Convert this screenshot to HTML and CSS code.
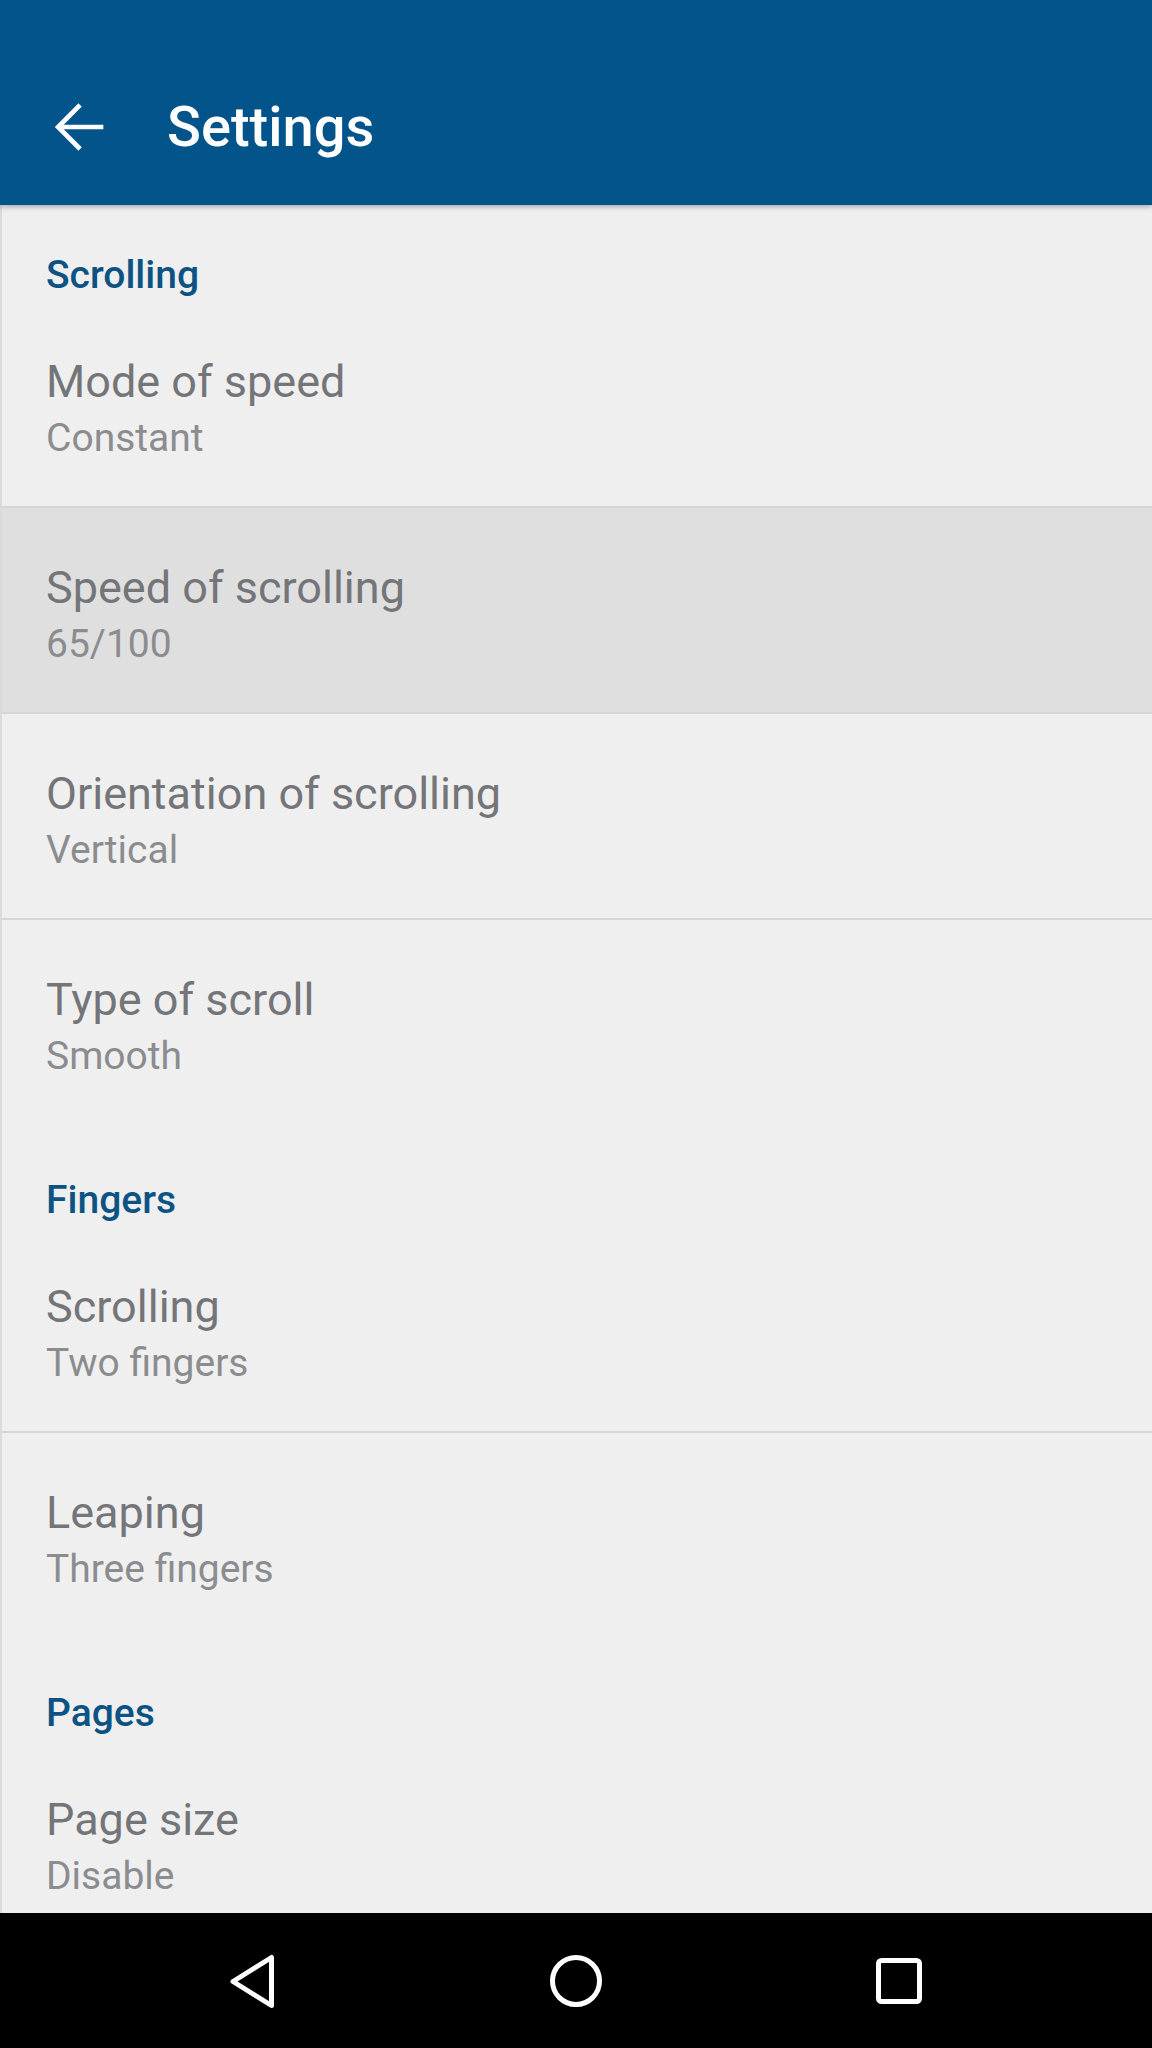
FILE: index.html
```html
<!DOCTYPE html>
<html lang="en">
<head>
  <meta charset="UTF-8">
  <meta name="viewport" content="width=device-width, initial-scale=1.0">
  <title>Settings</title>
  <link rel="stylesheet" href="styles.css">
</head>
<body>

<div class="toolbar">
  <button class="back-btn" aria-label="Back">
    <svg viewBox="0 0 24 24" width="66" height="66">
      <path d="M20 12H4.8M11.8 4.6L4.4 12l7.4 7.4" fill="none" stroke="#fff" stroke-width="1.7" stroke-linecap="square"/>
    </svg>
  </button>
  <h1>Settings</h1>
</div>

<div class="prefs">
  <div class="category">Scrolling</div>
  <div class="group">
    <div class="pref">
      <div class="pref-title">Mode of speed</div>
      <div class="pref-summary">Constant</div>
    </div>
    <div class="pref pressed">
      <div class="pref-title">Speed of scrolling</div>
      <div class="pref-summary">65/100</div>
    </div>
    <div class="pref">
      <div class="pref-title">Orientation of scrolling</div>
      <div class="pref-summary">Vertical</div>
    </div>
    <div class="pref">
      <div class="pref-title">Type of scroll</div>
      <div class="pref-summary">Smooth</div>
    </div>
  </div>

  <div class="category">Fingers</div>
  <div class="group">
    <div class="pref">
      <div class="pref-title">Scrolling</div>
      <div class="pref-summary">Two fingers</div>
    </div>
    <div class="pref">
      <div class="pref-title">Leaping</div>
      <div class="pref-summary">Three fingers</div>
    </div>
  </div>

  <div class="category">Pages</div>
  <div class="group">
    <div class="pref">
      <div class="pref-title">Page size</div>
      <div class="pref-summary">Disable</div>
    </div>
  </div>
</div>

<div class="navbar">
  <svg class="nav-icon" viewBox="0 0 64 64" width="64" height="64">
    <path d="M12 32.5L50.5 8.5V56.5Z" fill="none" stroke="#fff" stroke-width="5" stroke-linejoin="round"/>
  </svg>
  <svg class="nav-icon" viewBox="0 0 64 64" width="64" height="64">
    <circle cx="32" cy="32" r="23.5" fill="none" stroke="#fff" stroke-width="5"/>
  </svg>
  <svg class="nav-icon" viewBox="0 0 64 64" width="64" height="64">
    <rect x="11.5" y="11.5" width="41" height="41" rx="3" fill="none" stroke="#fff" stroke-width="5"/>
  </svg>
</div>

</body>
</html>
```

FILE: styles.css
```css
body {
  font-family: Roboto, "Noto Sans", Arial, sans-serif;
  background-color: #efefef;
  margin: 0;
  padding: 0;
  width: 1152px;
  height: 2048px;
  display: flex;
  flex-direction: column;
  overflow: hidden;
}
.toolbar {
  height: 205px;
  box-sizing: border-box;
  padding: 48px 0 0 46px;
  background: #02548a;
  display: flex;
  align-items: center;
  box-shadow: 0px 2px 5px rgba(0, 0, 0, 0.28);
  position: relative;
  z-index: 1;
  flex-shrink: 0;
}
.back-btn {
  width: 66px;
  height: 66px;
  padding: 0;
  border: none;
  background: none;
  display: flex;
}
.toolbar h1 {
  margin: 0 0 0 55px;
  color: white;
  font-size: 56px;
  font-weight: 500;
  line-height: 1;
}
.prefs {
  flex: 1;
  overflow: hidden;
  border-left: 2px solid #dadada;
}
.category {
  padding: 55px 44px 7px;
  font-size: 39px;
  line-height: 39px;
  font-weight: 500;
  color: #0c5384;
}
.category:first-child {
  padding-top: 51px;
}
.pref {
  padding: 58px 44px 48px;
  border-bottom: 2px solid #d6d6d6;
}
.pref:last-child {
  border-bottom: none;
  padding-bottom: 50px;
}
.pressed {
  background: #dfdfdf;
}
.pref-title {
  font-size: 45px;
  line-height: 44px;
  color: #747579;
}
.pref-summary {
  margin-top: 15px;
  font-size: 39px;
  line-height: 39px;
  color: #8b8c8f;
}
.navbar {
  height: 135px;
  flex-shrink: 0;
  background: black;
  display: flex;
  justify-content: center;
  align-items: center;
  gap: 259px;
}
.nav-icon {
  display: block;
}
```
